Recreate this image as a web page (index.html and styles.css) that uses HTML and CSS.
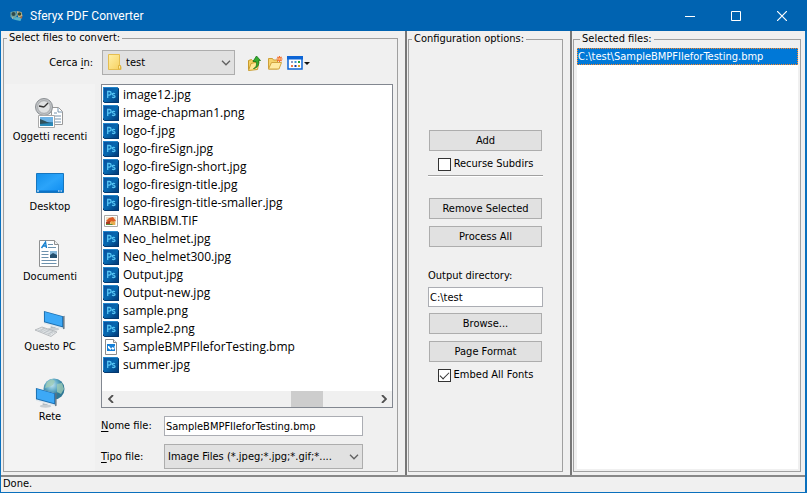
FILE: index.html
```html
<!DOCTYPE html>
<html lang="it">
<head>
<meta charset="utf-8">
<title>Sferyx PDF Converter</title>
<link rel="stylesheet" href="styles.css">
</head>
<body>
<svg class="defs" aria-hidden="true">
  <defs>
    <linearGradient id="g-ps" x1="0" y1="0" x2="1" y2="1"><stop offset="0" stop-color="#0a4f9c"/><stop offset=".5" stop-color="#0668b0"/><stop offset="1" stop-color="#023a78"/></linearGradient>
    <linearGradient id="g-screen" x1="0" y1="0" x2="1" y2="1"><stop offset="0" stop-color="#1490ea"/><stop offset=".5" stop-color="#2ba4fa"/><stop offset="1" stop-color="#0d8cf0"/></linearGradient>
    <linearGradient id="g-folder" x1="0" y1="0" x2="1" y2="1"><stop offset="0" stop-color="#fff0a8"/><stop offset="1" stop-color="#f6cf5c"/></linearGradient>
    <radialGradient id="g-globe" cx=".4" cy=".3"><stop offset="0" stop-color="#c4e6f2"/><stop offset=".6" stop-color="#5fa9c6"/><stop offset="1" stop-color="#2f7896"/></radialGradient>
    <symbol id="ps" viewBox="0 0 16 16">
      <path d="M0 0h14l2 1.500V16H1.500L0 14.500z" fill="#03386f"/>
      <path d="M1 1h14v14H1z" fill="url(#g-ps)"/>
      <path d="M0 0h14l1 1H1v13l-1-1z" fill="#2386cc"/>
      <path d="M4.700 11V4.500h1.600a1.700 1.700 0 0 1 0 3.600H4.700M12 6.700c-1-.7-2.700-.5-2.700.5 0 1.300 2.700.8 2.700 2.200 0 1.300-1.900 1.300-2.900.7" fill="none" stroke="#55c4f4" stroke-width="1.300"/>
    </symbol>
    <symbol id="tif" viewBox="0 0 16 16">
      <path d="M1.500 2.500h13v11h-13z" fill="#fff" stroke="#aaa"/>
      <path d="M3 4h10v8H3z" fill="#eee3c8"/>
      <path d="M3 8l3-3 4-1 3 4-3 1-4 .5z" fill="#dc5b25"/><path d="M3 9l4-1v3H3z" fill="#a93d20"/><path d="M8 8l4 1v3H7z" fill="#e9ad4f"/><path d="M3 11h6l1 1H3z" fill="#548b32"/>
    </symbol>
    <symbol id="bmp" viewBox="0 0 16 16">
      <path d="M2.500.5h8l3 3v12h-11z" fill="#fff" stroke="#8c8c8c"/><path d="M10.500.5v3h3" fill="#eee" stroke="#8c8c8c"/>
      <path d="M4 5h8v7H4z" fill="#1680d8"/><path d="M5 7h1l2 2.500L9.500 8l1.500 1V7h.5v2.500L10 11 8.500 9.500 7.500 11 5 9z" fill="#fff"/>
    </symbol>
    <symbol id="chev" viewBox="0 0 10 6"><path d="M1 .8l4 4 4-4" fill="none" stroke="#606060" stroke-width="1.300"/></symbol>
    <symbol id="monitor" viewBox="0 0 24 22">
      <path d="M8 17l5 1 1 3-6-1z" fill="#a9b3ba"/><ellipse cx="11" cy="20" rx="6" ry="1.600" fill="#c7cdd1"/>
      <path d="M1 1l20 5.500V20L1 14.500z" fill="#e1e8ed"/><path d="M21 6.500l1.500-.5v13.500L21 20z" fill="#60717d"/>
      <path d="M1 1l20 5.500v11.700L1 12.800z" fill="#1d6faf"/><path d="M2 2.200l18 5v9.700L2 12z" fill="#3da9f7"/>
    </symbol>
  </defs>
</svg>
<div class="window">
  <header class="titlebar">
    <svg class="app-icon" viewBox="0 0 14 14" aria-hidden="true">
      <path d="M1 3l5-1 2 4-3 4-4-2z" fill="#6fa3a0"/><path d="M7 2l5 1 1 4-4 2z" fill="#c9b88a"/><circle cx="4" cy="5" r="2" fill="#2f4a4a"/><circle cx="10" cy="5" r="1.800" fill="#3a4b2a"/><path d="M3 10l4-2 5 1-1 3-5-1z" fill="#58b4c9"/><path d="M2 8l2 1-1 1z" fill="#e6d9a8"/><path d="M10 8l3-1-1 3z" fill="#b66c3c"/>
    </svg>
    <h1>Sferyx PDF Converter</h1>
    <div class="caption-buttons">
      <button type="button" aria-label="Minimize"><svg viewBox="0 0 10 10"><path d="M0 5.500h10" stroke="#fff" fill="none"/></svg></button>
      <button type="button" aria-label="Maximize"><svg viewBox="0 0 10 10"><path d="M.5.5h9v9h-9z" stroke="#fff" fill="none"/></svg></button>
      <button type="button" aria-label="Close"><svg viewBox="0 0 10 10"><path d="M0 0l10 10M10 0L0 10" stroke="#fff" stroke-width="1.200" fill="none"/></svg></button>
    </div>
  </header>

  <main class="panes">
    <section class="pane">
      <fieldset class="group chooser">
        <legend>Select files to convert:</legend>
        <div class="look-in">
          <label for="folder">Cerca <u>i</u>n:</label>
          <div class="combo folder-combo">
            <svg class="folder-icon" viewBox="0 0 14 16" aria-hidden="true"><path d="M.5.5h11v11l1.500 1v3H.5z" fill="url(#g-folder)" stroke="#e5bd50"/><path d="M10.500 15v-3.500h2V15z" fill="#ffe99a" stroke="#dfb33d"/></svg>
            <select id="folder"><option>test</option></select>
            <svg class="chev"><use href="#chev"/></svg>
          </div>
          <div class="tools">
            <button type="button" aria-label="Up one level"><svg viewBox="0 0 16 16"><path d="M1.500 5.500l3-1 1 1h3v9h-7z" fill="#f3cf60" stroke="#c79a2c"/><path d="M4 8.500l8-2-1.500 8-9 1z" fill="#ffe795" stroke="#c99d31"/><path d="M6.500 13.500c3-1 3.500-4 2.500-7H6L9.500 1l4 4.500h-2c1 4-1 7.500-5 8z" fill="#35ad2f" stroke="#157516" stroke-width=".8"/></svg></button>
            <button type="button" aria-label="New folder"><svg viewBox="0 0 16 16"><path d="M1.500 3.500h4l1 1.500h4v9h-9z" fill="#f5d36c" stroke="#cda039"/><path d="M4.500 7.500h10l-2.500 6.500H1.500z" fill="#ffeba2" stroke="#d2a640"/><path d="M12.500 1v6M9.500 4h6M10.400 1.900l4.200 4.200M14.600 1.900l-4.200 4.200" stroke="#f06a2a" stroke-width="1.200"/><circle cx="12.500" cy="4" r="1.300" fill="#ffb070"/></svg></button>
            <button type="button" aria-label="View menu" class="view"><svg viewBox="0 0 24 16"><path d="M1 2h14v12H1z" fill="#fff" stroke="#0c65d6" stroke-width="1.500"/><path d="M0 1h16v3.500H0z" fill="#0c65d6"/><path d="M4 6h2v2H4z" fill="#8b9cc4"/><path d="M7.500 6h2v2h-2z" fill="#3a95d4"/><path d="M11 6h2v2h-2z" fill="#23a03a"/><path d="M4 10h2v2H4z" fill="#f07946"/><path d="M7.500 10h2v2h-2z" fill="#173f9c"/><path d="M11 10h2v2h-2z" fill="#d9a225"/><path d="M17 7h6l-3 3z" fill="#111"/></svg></button>
          </div>
        </div>
        <nav class="places">
          <a href="#"><svg viewBox="0 0 32 32"><path d="M17.500 9.500h7l4 4v13h-11z" fill="#fff" stroke="#999"/><path d="M24 10v4h4M20 15h3M20 18h7M20 21h7M20 24h7" fill="none" stroke="#7793ad"/><circle cx="10" cy="9" r="8.500" fill="#bfc2c5" stroke="#8b8f93"/><circle cx="10" cy="9" r="6.300" fill="#dfe1e2" stroke="#96999c" stroke-width=".7"/><path d="M10 9l4-4M10 9l-5-1" fill="none" stroke="#333" stroke-width="1.300"/><path d="M4.500 17.500h16v12h-16z" fill="#fff" stroke="#aaa"/><path d="M6 19h13v9H6z" fill="#6db3e6"/><path d="M6 23.500l13 1V28H6z" fill="#26668b"/><path d="M6 21l5 2 4 2-9 1z" fill="#31525b"/><path d="M6 26l13-1v3H6z" fill="#2b8ab8"/></svg>Oggetti recenti</a>
          <a href="#"><svg viewBox="0 0 32 32"><path d="M2.500 5.500h27v19h-27z" fill="url(#g-screen)" stroke="#1676bf"/><path d="M3 22.500h26V24H3z" fill="#0c72c8"/><path d="M3 23h2M24 23h1.500M26.500 23H28" stroke="#fff"/></svg>Desktop</a>
          <a href="#"><svg viewBox="0 0 32 32"><path d="M5.500 2.500h15l4 4v22h-19z" fill="#fff" stroke="#8e9091"/><path d="M20.500 2.500v4h4" fill="#eee" stroke="#8e9091"/><path d="M7.500 10l4-6 1 6M9 8h3" stroke="#1680cf" stroke-width="1.400" fill="none"/><path d="M14 6.500h5M14 9.500h8M7.500 13.500h7M7.500 16.500h7M7.500 19.500h7M7.500 22.500h15M7.500 25.500h15" stroke="#6c91ad" fill="none"/><path d="M16 13h7v7h-7z" fill="#88b9da"/><path d="M16 17l3-2 4 2v3h-7z" fill="#244f6d"/></svg>Documenti</a>
          <a href="#"><svg viewBox="0 0 32 32"><use href="#monitor" x="9" y="1" width="23" height="23"/><path d="M1 22l7-3 15 5-6 4.500z" fill="#e4e7e9" stroke="#a3a8ac" stroke-width=".7"/><path d="M4 22l13 4.500M6 21l13 4.300M8 20l13 4.500M6 23.500l5-3.500M10 25l5-3M14 26.500l5-3" stroke="#b4babf" stroke-width=".6"/></svg>Questo PC</a>
          <a href="#"><svg viewBox="0 0 32 32"><circle cx="20" cy="11" r="10.500" fill="url(#g-globe)"/><path d="M13 4l5-3 3 2-2 4-4 2-4 1zM23 6l5-1 2 6-3 5-4-2z" fill="#9ecbb5" opacity=".8"/><use href="#monitor" x="1" y="8" width="23" height="23"/></svg>Rete</a>
        </nav>
        <div class="file-view">
          <ul class="files">
            <li><svg><use href="#ps"/></svg>image12.jpg</li>
            <li><svg><use href="#ps"/></svg>image-chapman1.png</li>
            <li><svg><use href="#ps"/></svg>logo-f.jpg</li>
            <li><svg><use href="#ps"/></svg>logo-fireSign.jpg</li>
            <li><svg><use href="#ps"/></svg>logo-fireSign-short.jpg</li>
            <li><svg><use href="#ps"/></svg>logo-firesign-title.jpg</li>
            <li><svg><use href="#ps"/></svg>logo-firesign-title-smaller.jpg</li>
            <li><svg><use href="#tif"/></svg>MARBIBM.TIF</li>
            <li><svg><use href="#ps"/></svg>Neo_helmet.jpg</li>
            <li><svg><use href="#ps"/></svg>Neo_helmet300.jpg</li>
            <li><svg><use href="#ps"/></svg>Output.jpg</li>
            <li><svg><use href="#ps"/></svg>Output-new.jpg</li>
            <li><svg><use href="#ps"/></svg>sample.png</li>
            <li><svg><use href="#ps"/></svg>sample2.png</li>
            <li><svg><use href="#bmp"/></svg>SampleBMPFIleforTesting.bmp</li>
            <li><svg><use href="#ps"/></svg>summer.jpg</li>
          </ul>
          <div class="scrollbar">
            <button type="button" aria-label="Scroll left"><svg viewBox="0 0 6 8"><path d="M5 0L1 4l4 4" fill="none" stroke="#505050" stroke-width="1.800"/></svg></button>
            <div class="track"><div class="thumb"></div></div>
            <button type="button" aria-label="Scroll right"><svg viewBox="0 0 6 8"><path d="M1 0l4 4-4 4" fill="none" stroke="#505050" stroke-width="1.800"/></svg></button>
          </div>
        </div>
        <div class="fields">
          <label for="fname"><u>N</u>ome file:</label>
          <input id="fname" type="text" value="SampleBMPFIleforTesting.bmp">
          <label for="ftype"><u>T</u>ipo file:</label>
          <div class="combo">
            <select id="ftype"><option>Image Files (*.jpeg;*.jpg;*.gif;*....</option></select>
            <svg class="chev"><use href="#chev"/></svg>
          </div>
        </div>
      </fieldset>
    </section>

    <section class="pane divided">
      <fieldset class="group">
        <legend>Configuration options:</legend>
        <div class="options">
          <button type="button" class="btn">Add</button>
          <label class="check"><input type="checkbox"><span>Recurse Subdirs</span></label>
          <hr>
          <button type="button" class="btn">Remove Selected</button>
          <button type="button" class="btn">Process All</button>
          <label for="outdir" class="out-label">Output directory:</label>
          <input id="outdir" type="text" value="C:\test">
          <button type="button" class="btn">Browse...</button>
          <button type="button" class="btn">Page Format</button>
          <label class="check"><input type="checkbox" checked><span>Embed All Fonts</span></label>
        </div>
      </fieldset>
    </section>

    <section class="pane divided">
      <fieldset class="group selected">
        <legend>Selected files:</legend>
        <ul class="selected-list">
          <li>C:\test\SampleBMPFIleforTesting.bmp</li>
        </ul>
      </fieldset>
    </section>
  </main>
  <footer class="status">Done.</footer>
</div>
</body>
</html>
```

FILE: styles.css
```css
* { box-sizing: border-box; }

body {
  margin: 0;
  background: #f0f0f0;
  color: #000;
  font: 11px/14px Tahoma, "DejaVu Sans Condensed", sans-serif;
}

.defs { position: absolute; width: 0; height: 0; }

ul { list-style: none; margin: 0; padding: 0; }
button, input, select { font: inherit; color: inherit; margin: 0; }
a { color: inherit; text-decoration: none; }
svg { display: block; flex: none; }
u { text-underline-offset: 2px; }

.window {
  min-height: 100vh;
  display: flex;
  flex-direction: column;
  border: solid #0a70bd;
  border-width: 0 2px 1px 1px;
}

.titlebar {
  height: 31px;
  display: flex;
  align-items: center;
  background: #0063b1;
  color: #fff;
  margin: 0 -2px 0 -1px;
  padding-left: 9px;
}
.titlebar h1 { margin: 0; font: 12px/14px Roboto, sans-serif; flex: 1; }
.app-icon { width: 15px; height: 14px; margin-right: 6px; }
.caption-buttons { display: flex; padding-right: 2px; }
.caption-buttons button {
  width: 46px;
  height: 30px;
  padding: 0;
  border: 0;
  background: none;
  display: grid;
  place-items: center;
}
.caption-buttons svg { width: 10px; height: 10px; }

.panes {
  flex: 1;
  display: grid;
  grid-template-columns: 404fr 165fr 235fr;
}
.pane { display: flex; padding: 0 7px 3px 2px; min-width: 0; }
.pane.divided { border-left: 2px solid #777; padding: 1px 7px 3px 1px; }
.pane.divided:last-child { padding-right: 4px; }

.group {
  flex: 1;
  min-width: 0;
  margin: 0;
  padding: 0;
  border: 1px solid #a0a0a0;
}
.group legend { margin-left: 3px; padding: 0 2px; }

.chooser {
  display: grid;
  grid-template-columns: 97px 1fr;
  grid-template-rows: 39px 1fr auto;
  padding-right: 4px;
}
.look-in {
  grid-column: 1 / 3;
  display: flex;
  align-items: center;
  padding-bottom: 4px;
}
.look-in > label { width: 98px; padding-right: 9px; text-align: right; }

.combo { position: relative; }
.combo select {
  width: 100%;
  height: 25px;
  appearance: none;
  border: 1px solid #adadad;
  border-radius: 0;
  background: #e1e1e1;
  padding: 0 18px 0 3px;
}
.combo .chev {
  position: absolute;
  right: 4px;
  top: 10px;
  width: 10px;
  height: 6px;
  pointer-events: none;
}
.folder-combo { width: 133px; }
.folder-combo select { padding-left: 23px; }
.folder-icon { position: absolute; left: 6px; top: 4px; width: 14px; height: 16px; }

.tools { display: flex; gap: 4px; padding-left: 12px; }
.tools button { border: 0; padding: 0; background: none; }
.tools svg { width: 16px; height: 16px; }
.tools .view svg { width: 24px; }

.places {
  grid-row: 2 / 4;
  margin: 0 6px 0 1px;
  background: #f3f3f3;
  padding-top: 14px;
}
.places a {
  height: 70px;
  display: flex;
  flex-direction: column;
  align-items: center;
  white-space: nowrap;
}
.places svg { width: 32px; height: 32px; }

.file-view {
  display: flex;
  flex-direction: column;
  border: 1px solid #828790;
  background: #fff;
}
.files { flex: 1; font: 12px/18px "Open Sans", sans-serif; padding: 1px; }
.files li { display: flex; align-items: center; gap: 4px; }
.files svg { width: 16px; height: 16px; }

.scrollbar { display: flex; height: 16px; background: #f0f0f0; }
.scrollbar button {
  width: 17px;
  padding: 0;
  border: 0;
  background: none;
  display: grid;
  place-items: center;
}
.scrollbar svg { width: 6px; height: 8px; }
.track { flex: 1; display: flex; }
.thumb { margin-left: 67%; width: 32px; background: #cdcdcd; }

input[type="text"] {
  height: 20px;
  width: 100%;
  border: 1px solid #abadb3;
  background: #fff;
  padding: 0 1px;
}

.fields {
  display: grid;
  grid-template-columns: 63px 199px;
  row-gap: 8px;
  align-items: center;
  padding: 8px 0 2px;
}

.options {
  width: 115px;
  margin: 0 auto;
  padding-top: 84px;
  display: flex;
  flex-direction: column;
}
.btn {
  height: 21px;
  margin: 0 1px 7px;
  padding: 0;
  border: 1px solid #adadad;
  background: #e1e1e1;
}
.check {
  display: flex;
  align-items: center;
  justify-content: center;
  gap: 3px;
  height: 12px;
  white-space: nowrap;
}
.check input {
  appearance: none;
  width: 13px;
  height: 13px;
  flex: none;
  border: 1px solid #333;
  background: #fff;
  display: grid;
  place-items: center;
}
.check input:checked::before {
  content: "";
  width: 8px;
  height: 4px;
  border: solid #333;
  border-width: 0 0 1px 1px;
  transform: translateY(-1px) rotate(-45deg);
}
.options hr {
  width: 100%;
  margin: 5px 0 21px;
  border: solid;
  border-width: 1px 0;
  border-color: #a0a0a0 transparent #fff;
}
.out-label { margin: 15px 0 4px; }
.options input[type="text"] { margin-bottom: 6px; }

.selected { display: flex; padding: 2px 2px 2px 3px; }
.selected-list { flex: 1; background: #fff; min-width: 0; }
.selected-list li {
  background: #0078d7;
  color: #fff;
  outline: 1px dotted #ff8728;
  outline-offset: -1px;
  padding: 2px 1px 1px;
  white-space: nowrap;
}

.status {
  height: 17px;
  border-top: 2px solid #888;
  padding-left: 2px;
}
```
